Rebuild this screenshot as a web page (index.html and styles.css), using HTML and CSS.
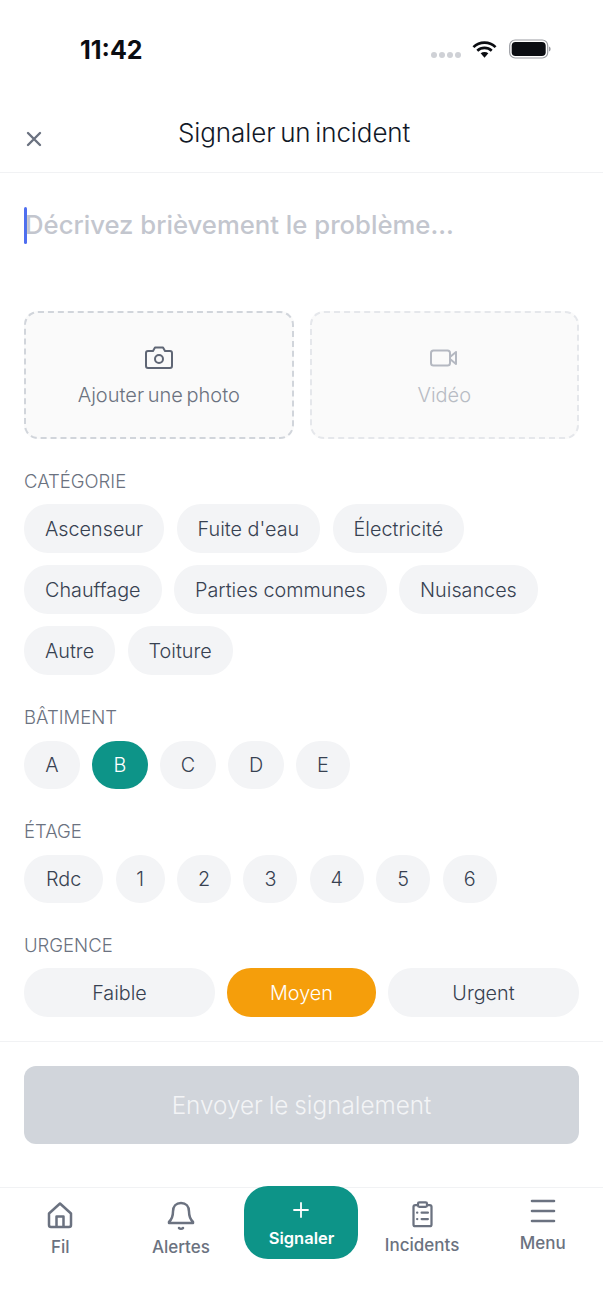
FILE: index.html
```html
<!DOCTYPE html>
<html lang="fr">
<head>
  <meta charset="UTF-8" />
  <title>Signaler un incident</title>
  <link rel="stylesheet" href="styles.css">
</head>
<body>
  <div class="status">
    <span class="time">11:42</span>
    <div class="status-icons">
      <span class="dots"><i></i><i></i><i></i><i></i></span>
      <svg class="wifi" width="25" height="19" viewBox="0 0 26 18"><path d="M1.5 6.500a16.500 16.500 0 0 1 23 0M5.500 10.200a11 11 0 0 1 15 0" fill="none" stroke="#0b0d12" stroke-width="2.800"/><path d="M9 13a6 6 0 0 1 8 0l-4 4.500z" fill="#0b0d12"/></svg>
      <svg class="battery" width="42" height="20" viewBox="0 0 42 20"><rect x="0.700" y="1" width="38" height="18" rx="5.500" fill="none" stroke="#9a9ca2" stroke-width="1.200"/><rect x="2.700" y="3" width="34" height="14" rx="3.800" fill="#0b0d12"/><path d="M40 7.500c1.200.4 1.600 1.400 1.600 2.500s-.4 2.100-1.600 2.500z" fill="#9a9ca2"/></svg>
    </div>
  </div>

  <header class="top">
    <svg class="close" width="16" height="16" viewBox="0 0 16 16"><path d="M2 2l12 12M14 2L2 14" fill="none" stroke="#6b7280" stroke-width="2.400" stroke-linecap="round"/></svg>
    <h1>Signaler un incident</h1>
  </header>

  <main class="form">
    <div class="desc"><span class="caret"></span><span class="placeholder">Décrivez brièvement le problème...</span></div>

    <div class="media">
      <div class="drop">
        <svg width="30" height="26" viewBox="0 0 30 26" fill="none" stroke="#5f6675" stroke-width="2" stroke-linejoin="round"><path d="M4 6h5l2-3.500h8L21 6h5a2 2 0 0 1 2 2v13a2 2 0 0 1-2 2H4a2 2 0 0 1-2-2V8a2 2 0 0 1 2-2z"/><circle cx="15" cy="14" r="4"/></svg>
        <span>Ajouter une photo</span>
      </div>
      <div class="drop off">
        <svg width="30" height="26" viewBox="0 0 30 26" fill="none" stroke="#b4b8c1" stroke-width="2" stroke-linejoin="round"><rect x="2" y="5.500" width="19" height="15" rx="2.500"/><path d="M21 12l6-5v12l-6-5z"/></svg>
        <span>Vidéo</span>
      </div>
    </div>

    <h2 class="first">CATÉGORIE</h2>
    <div class="chips cats">
      <span class="chip">Ascenseur</span>
      <span class="chip">Fuite d'eau</span>
      <span class="chip">Électricité</span>
      <span class="chip">Chauffage</span>
      <span class="chip">Parties communes</span>
      <span class="chip">Nuisances</span>
      <span class="chip">Autre</span>
      <span class="chip">Toiture</span>
    </div>

    <h2>BÂTIMENT</h2>
    <div class="chips tight">
      <span class="chip round">A</span>
      <span class="chip round teal">B</span>
      <span class="chip round">C</span>
      <span class="chip round">D</span>
      <span class="chip round">E</span>
    </div>

    <h2>ÉTAGE</h2>
    <div class="chips">
      <span class="chip floor">Rdc</span>
      <span class="chip num small">1</span>
      <span class="chip num">2</span>
      <span class="chip num">3</span>
      <span class="chip num">4</span>
      <span class="chip num">5</span>
      <span class="chip num">6</span>
    </div>

    <h2 class="last">URGENCE</h2>
    <div class="urgency">
      <span class="chip">Faible</span>
      <span class="chip orange">Moyen</span>
      <span class="chip">Urgent</span>
    </div>
  </main>

  <div class="submit-wrap">
    <div class="submit">Envoyer le signalement</div>
  </div>

  <nav class="tabs">
    <div class="tab tab-fil">
      <svg width="28" height="28" viewBox="0 0 28 28" fill="none" stroke="#6b7280" stroke-width="2.500" stroke-linejoin="round"><path d="M3 12.500L14 2.500l11 10V24a2 2 0 0 1-2 2H5a2 2 0 0 1-2-2z"/><path d="M10.500 26V15.500h7V26"/></svg>
      <span>Fil</span>
    </div>
    <div class="tab tab-alert">
      <svg width="28" height="30" viewBox="0 0 28 30" fill="none" stroke="#6b7280" stroke-width="2.500" stroke-linejoin="round"><path d="M14 2c-5 0-8 3.500-8 8.500 0 6-1.500 8-4 10.500v1h24v-1c-2.500-2.500-4-4.500-4-10.500C22 5.500 19 2 14 2z"/><path d="M12 27c1 1 3 1 4 0" stroke-linecap="round"/></svg>
      <span>Alertes</span>
    </div>
    <div class="tab-main">
      <svg width="18" height="18" viewBox="0 0 18 18"><path d="M9 2v14M2 9h14" stroke="#fff" stroke-width="1.800" stroke-linecap="round"/></svg>
      <span>Signaler</span>
    </div>
    <div class="tab tab-inc">
      <svg width="23" height="27" viewBox="0 0 24 30" fill="none" stroke="#6b7280" stroke-width="2.500" stroke-linecap="round" stroke-linejoin="round"><path d="M7 4.500H4a2 2 0 0 0-2 2V26a2 2 0 0 0 2 2h16a2 2 0 0 0 2-2V6.500a2 2 0 0 0-2-2h-3"/><rect x="7" y="1.500" width="10" height="5" rx="1.500"/><path d="M6 13h.2M11 13h7M6 20h.2M11 20h7"/></svg>
      <span>Incidents</span>
    </div>
    <div class="tab tab-menu">
      <svg width="26" height="24" viewBox="0 0 26 24"><path d="M2 2h22M2 12h22M2 22h22" stroke="#6b7280" stroke-width="2.600" stroke-linecap="round"/></svg>
      <span>Menu</span>
    </div>
  </nav>
</body>
</html>
```

FILE: styles.css
```css
* { box-sizing: border-box; }
body { margin: 0; width: 603px; height: 1311px; background: #fff; font-family: Inter, "Liberation Sans", sans-serif; color: #374151; overflow: hidden; }

.status { height: 100px; padding: 35px 52px 0 80px; display: flex; justify-content: space-between; align-items: flex-start; }
.time { font-size: 25px; font-weight: 700; line-height: 30px; color: #0b0d12; }
.status-icons { display: flex; align-items: center; gap: 11px; padding-top: 4px; }
.dots { display: flex; gap: 2px; padding-top: 12px; }
.dots i { width: 6px; height: 6px; border-radius: 50%; background: #cfd1d6; }
.wifi { margin-right: 1px; }

.top { height: 73px; border-bottom: 1px solid #f1f2f4; display: flex; align-items: flex-start; padding: 0 0 0 26px; }
.close { margin-top: 31px; }
.top h1 { margin: 16px 0 0 136px; font-size: 26px; font-weight: 350; line-height: 34px; letter-spacing: -0.1px; word-spacing: -2.5px; color: #111827; }

.form { padding: 0 24px; }
.desc { height: 138px; padding-top: 34px; display: flex; align-items: flex-start; }
.caret { width: 3px; height: 37px; background: #4f6ef0; border-radius: 2px; flex: none; }
.placeholder { margin: 0 0 0 -2px; font-size: 25.700px; font-weight: 450; line-height: 35px; color: #c3c6ce; }

.media { display: flex; gap: 16px; }
.drop { flex: 1; height: 128px; border: 2px dashed #d1d5db; border-radius: 14px; background: #fafafa; display: flex; flex-direction: column; align-items: center; padding-top: 32px; gap: 11px; font-size: 20px; font-weight: 350; word-spacing: -2px; line-height: 26px; color: #6b7280; }
.drop.off { border-color: #e5e7eb; color: #b8bcc4; }

h2 { margin: 30px 0 12px; font-size: 18.500px; font-weight: 350; line-height: 24px; color: #6b7280; }
h2.first { margin: 30px 0 11px; }
h2.last { margin-bottom: 11px; }

.chips { display: flex; flex-wrap: wrap; gap: 12px 12.400px; }
.chips.tight { column-gap: 12px; }
.chip { height: 48px; border-radius: 24px; background: #f3f4f6; display: flex; align-items: center; justify-content: center; padding: 0 21px; font-size: 19.800px; font-weight: 350; color: #374151; }
.cats .chip { height: 49px; }
.chip.round { width: 56px; padding: 0; }
.chip.round:last-child { width: 54px; }
.chip.floor { padding: 0 22px; }
.chip.num { width: 54px; padding: 0; }
.chip.small { width: 49px; }
.chip.teal { background: #0d9488; color: #fff; }
.chip.orange { background: #f59e0b; color: #fff; }
.urgency { display: grid; grid-template-columns: 191px 149px 191px; gap: 12px; }
.urgency .chip { height: 49px; }

.submit-wrap { margin-top: 24px; border-top: 1px solid #f1f2f4; padding: 24px 24px 0; }
.submit { height: 78px; border-radius: 12px; background: #d1d5db; color: #f3f4f6; display: flex; align-items: center; justify-content: center; font-size: 24.300px; font-weight: 350; word-spacing: -1px; }

.tabs { margin-top: 43px; height: 124px; border-top: 1px solid #f1f2f4; display: flex; }
.tab { width: 120.600px; display: flex; flex-direction: column; align-items: center; padding-top: 13px; font-size: 17px; font-weight: 500; line-height: 22px; color: #6b7280; }
.tab-main { width: 114px; height: 73px; margin: -2px 3.300px 0; background: #0d9488; border-radius: 24px; color: #fff; font-size: 16.500px; font-weight: 600; line-height: 22px; display: flex; flex-direction: column; align-items: center; padding-top: 15px; gap: 8px; }
.tab-fil { gap: 7px; }
.tab-alert { gap: 5px; }
.tab-inc { gap: 6px; }
.tab-menu { padding-top: 11px; gap: 9px; }
```
